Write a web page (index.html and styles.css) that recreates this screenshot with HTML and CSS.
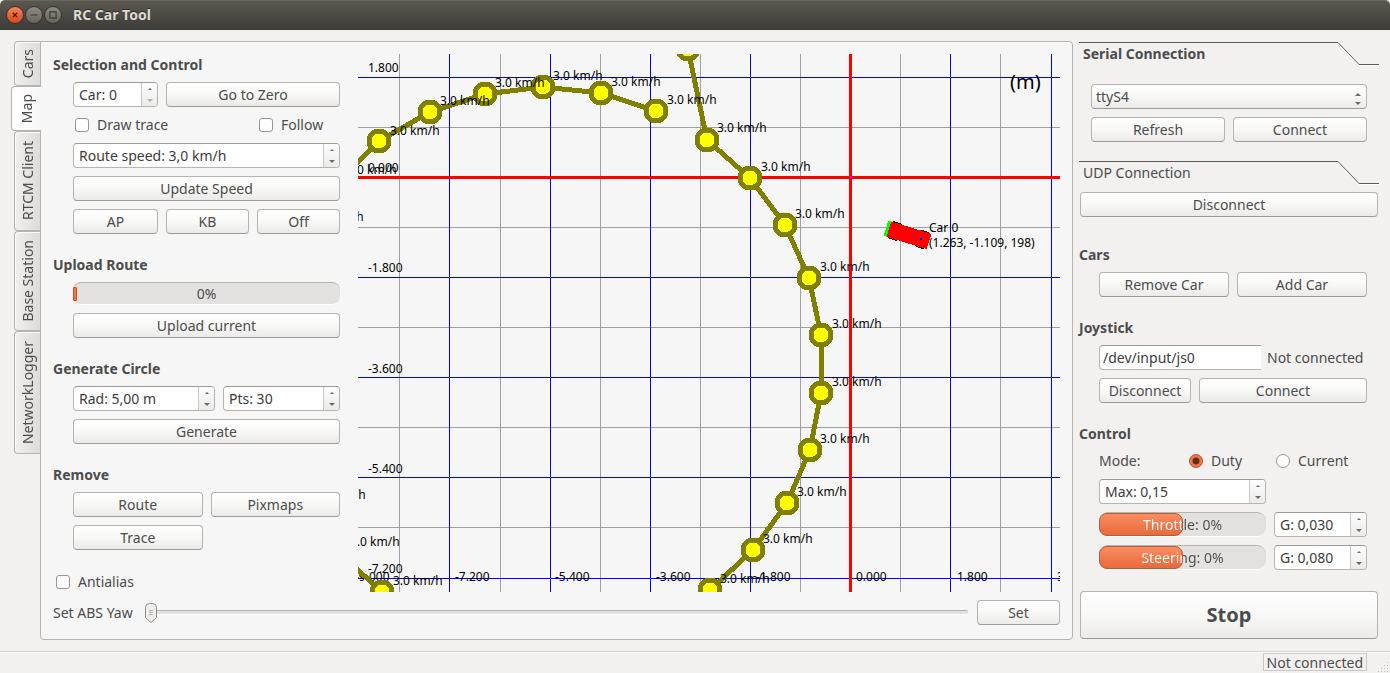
FILE: index.html
```html
<!DOCTYPE html>
<html lang="en">
<head>
<meta charset="utf-8">
<title>RC Car Tool</title>
<link rel="stylesheet" href="styles.css">
</head>
<body>
<svg class="defs" width="0" height="0" aria-hidden="true">
  <symbol id="up" viewBox="0 0 6 3"><path d="M0 3 L3 0 L6 3Z" fill="currentColor"/></symbol>
  <symbol id="down" viewBox="0 0 6 3"><path d="M0 0 L3 3 L6 0Z" fill="currentColor"/></symbol>
</svg>

<header class="titlebar">
  <div class="window-buttons">
    <button class="wb wb-close" aria-label="Close"><svg width="18" height="18" viewBox="0 0 18 18"><path d="M6.500 6.500l5 5M11.500 6.500l-5 5"/></svg></button>
    <button class="wb" aria-label="Minimize"><svg width="18" height="18" viewBox="0 0 18 18"><path d="M5 9h8"/></svg></button>
    <button class="wb" aria-label="Maximize"><svg width="18" height="18" viewBox="0 0 18 18"><path d="M5.500 5.500h7v7h-7z"/></svg></button>
  </div>
  <h1 class="window-title">RC Car Tool</h1>
</header>

<main class="workspace">
  <nav class="tabs" role="tablist" aria-label="Pages">
    <button class="tab tab-short" role="tab"><span>Cars</span></button>
    <button class="tab tab-short tab-active" role="tab" aria-selected="true"><span>Map</span></button>
    <button class="tab tab-medium" role="tab"><span>RTCM Client</span></button>
    <button class="tab tab-medium" role="tab"><span>Base Station</span></button>
    <button class="tab tab-long" role="tab"><span>NetworkLogger</span></button>
  </nav>

  <section class="page">
    <div class="page-top">
      <div class="tools">
        <section class="group">
          <h2>Selection and Control</h2>
          <div class="fields">
            <div class="row cols-car">
              <div class="spin"><input type="text" value="Car: 0" aria-label="Car"><span class="steps"><button aria-label="Up"><svg><use href="#up"/></svg></button><button class="off" aria-label="Down"><svg><use href="#down"/></svg></button></span></div>
              <button class="btn">Go to Zero</button>
            </div>
            <div class="row checks">
              <label class="check"><input type="checkbox">Draw trace</label>
              <label class="check"><input type="checkbox">Follow</label>
            </div>
            <div class="spin"><input type="text" value="Route speed: 3,0 km/h" aria-label="Route speed"><span class="steps"><button aria-label="Up"><svg><use href="#up"/></svg></button><button aria-label="Down"><svg><use href="#down"/></svg></button></span></div>
            <button class="btn">Update Speed</button>
            <div class="row cols-modes">
              <button class="btn">AP</button>
              <button class="btn">KB</button>
              <button class="btn">Off</button>
            </div>
          </div>
        </section>

        <section class="group">
          <h2>Upload Route</h2>
          <div class="fields">
            <div class="progress progress-low" role="progressbar" aria-label="Upload" aria-valuenow="0"><i class="sliver"></i><span>0%</span></div>
            <button class="btn">Upload current</button>
          </div>
        </section>

        <section class="group">
          <h2>Generate Circle</h2>
          <div class="fields">
            <div class="row cols-circle">
              <div class="spin"><input type="text" value="Rad: 5,00 m" aria-label="Radius"><span class="steps"><button aria-label="Up"><svg><use href="#up"/></svg></button><button aria-label="Down"><svg><use href="#down"/></svg></button></span></div>
              <div class="spin"><input type="text" value="Pts: 30" aria-label="Points"><span class="steps"><button aria-label="Up"><svg><use href="#up"/></svg></button><button aria-label="Down"><svg><use href="#down"/></svg></button></span></div>
            </div>
            <button class="btn">Generate</button>
          </div>
        </section>

        <section class="group">
          <h2>Remove</h2>
          <div class="fields">
            <div class="row cols-two">
              <button class="btn">Route</button>
              <button class="btn">Pixmaps</button>
              <button class="btn">Trace</button>
            </div>
          </div>
        </section>

        <label class="check antialias"><input type="checkbox">Antialias</label>
      </div>

      <div class="map">
        <svg class="map-canvas" role="img" aria-label="Route map">
          <g transform="translate(-358 -54)">
            <g class="grid-minor">
              <path d="M399.500 0V1200M500.500 0V1200M600.500 0V1200M700.500 0V1200M800.500 0V1200M900.500 0V1200M1000.500 0V1200"/>
              <path d="M300 127.500H2400M300 227.500H2400M300 327.500H2400M300 427.500H2400M300 527.500H2400"/>
            </g>
            <g class="grid-major">
              <path d="M449.500 0V1200M550.500 0V1200M650.500 0V1200M750.500 0V1200M950.500 0V1200M1051.500 0V1200"/>
              <path d="M300 77.500H2400M300 277.500H2400M300 377.500H2400M300 477.500H2400M300 578.500H2400"/>
            </g>
            <path class="axis" d="M850.500 0V1200M300 177.500H2400"/>
            <rect x="850" y="176" width="2" height="2" fill="#f0f"/>
            <g class="ticks">
              <text x="368" y="72">1.800</text>
              <text x="368" y="172">0.000</text>
              <text x="368" y="272">-1.800</text>
              <text x="368" y="373">-3.600</text>
              <text x="368" y="473">-5.400</text>
              <text x="368" y="573">-7.200</text>
              <text x="355" y="581">-9.000</text>
              <text x="455" y="581">-7.200</text>
              <text x="555" y="581">-5.400</text>
              <text x="656" y="581">-3.600</text>
              <text x="756" y="581">-1.800</text>
              <text x="856" y="581">0.000</text>
              <text x="957" y="581">1.800</text>
              <text x="1057" y="581">3.600</text>
            </g>
            <text class="unit" x="1010" y="89">(m)</text>
            <g class="car">
              <g transform="translate(908 235) rotate(17)">
                <path d="M-18-9h9v18h-9zM11-9h8v18h-8z" fill="#000"/>
                <rect x="-21" y="-8" width="43" height="16" fill="#f00"/>
                <rect x="-23" y="-8" width="3" height="16" fill="#0f0"/>
              </g>
              <rect x="920" y="238" width="2" height="2" fill="#00f"/>
            </g>
            <text x="929" y="232">Car 0</text>
            <text x="929" y="247">(1.263, -1.109, 198)</text>
            <polyline class="route" points="336,184 379,141 430,112 485,94 543,87 601,93 656,111"/>
            <polyline class="route" points="688,49 707,140 750,178 785,225 809,278 821,335 821,393 810,450 787,503 753,550 710,590 664,624"/>
            <polyline class="route" points="335,549 382,592"/>
            <g class="nodes">
              <circle cx="379" cy="141" r="10"/><circle cx="430" cy="112" r="10"/><circle cx="485" cy="94" r="10"/>
              <circle cx="543" cy="87" r="10"/><circle cx="601" cy="93" r="10"/><circle cx="656" cy="111" r="10"/>
              <circle cx="688" cy="49" r="10"/><circle cx="707" cy="140" r="10"/><circle cx="750" cy="178" r="10"/>
              <circle cx="785" cy="225" r="10"/><circle cx="809" cy="278" r="10"/><circle cx="821" cy="335" r="10"/>
              <circle cx="821" cy="393" r="10"/><circle cx="810" cy="450" r="10"/><circle cx="787" cy="503" r="10"/>
              <circle cx="753" cy="550" r="10"/><circle cx="710" cy="590" r="10"/><circle cx="382" cy="592" r="10"/>
            </g>
            <g>
              <text x="390" y="135">3.0 km/h</text><text x="440" y="105">3.0 km/h</text><text x="495" y="87">3.0 km/h</text>
              <text x="553" y="80">3.0 km/h</text><text x="611" y="86">3.0 km/h</text><text x="667" y="104">3.0 km/h</text>
              <text x="717" y="132">3.0 km/h</text><text x="761" y="171">3.0 km/h</text><text x="795" y="218">3.0 km/h</text>
              <text x="820" y="271">3.0 km/h</text><text x="832" y="328">3.0 km/h</text><text x="832" y="386">3.0 km/h</text>
              <text x="820" y="443">3.0 km/h</text><text x="797" y="496">3.0 km/h</text><text x="763" y="543">3.0 km/h</text>
              <text x="720" y="583">3.0 km/h</text><text x="393" y="585">3.0 km/h</text>
              <text x="347" y="174">3.0 km/h</text><text x="314" y="221">3.0 km/h</text>
              <text x="316" y="499">3.0 km/h</text><text x="350" y="546">3.0 km/h</text>
            </g>
          </g>
        </svg>
      </div>
    </div>

    <div class="yaw">
      <label for="yaw">Set ABS Yaw</label>
      <input id="yaw" type="range" min="0" max="360" value="0">
      <button class="btn">Set</button>
    </div>
  </section>

  <aside class="side">
    <section class="connection">
      <div class="dock-title"><h2>Serial Connection</h2><svg width="41" height="24" viewBox="0 0 41 24"><path class="shine" d="M0 1.500L21 23.500H41"/><path d="M0 .5L21 22.500H41"/></svg></div>
      <div class="serial">
        <div class="select"><select aria-label="Serial port"><option>ttyS4</option></select><span class="select-arrows"><svg><use href="#up"/></svg><svg><use href="#down"/></svg></span></div>
        <button class="btn">Refresh</button>
        <button class="btn">Connect</button>
      </div>
    </section>
    <section class="connection">
      <div class="dock-title"><h2 class="plain">UDP Connection</h2><svg width="41" height="24" viewBox="0 0 41 24"><path class="shine" d="M0 1.500L21 23.500H41"/><path d="M0 .5L21 22.500H41"/></svg></div>
      <button class="btn wide udp">Disconnect</button>
    </section>

    <div class="side-groups">
      <section class="group">
        <h2>Cars</h2>
        <div class="fields">
          <div class="row cols-two">
            <button class="btn">Remove Car</button>
            <button class="btn">Add Car</button>
          </div>
        </div>
      </section>
      <section class="group">
        <h2>Joystick</h2>
        <div class="fields">
          <div class="row joy-port">
            <input class="text-field" type="text" value="/dev/input/js0" aria-label="Joystick device">
            <span>Not connected</span>
          </div>
          <div class="row cols-joy">
            <button class="btn">Disconnect</button>
            <button class="btn">Connect</button>
          </div>
        </div>
      </section>
      <section class="group">
        <h2>Control</h2>
        <div class="fields">
          <div class="row mode">
            <span>Mode:</span>
            <label class="check"><input type="radio" name="mode" checked>Duty</label>
            <label class="check"><input type="radio" name="mode">Current</label>
          </div>
          <div class="row cols-control">
            <div class="spin"><input type="text" value="Max: 0,15" aria-label="Maximum"><span class="steps"><button aria-label="Up"><svg><use href="#up"/></svg></button><button aria-label="Down"><svg><use href="#down"/></svg></button></span></div>
          </div>
          <div class="row cols-control">
            <div class="progress" role="progressbar" aria-label="Throttle" aria-valuenow="0"><i class="fill" style="width:50%"></i><span class="split">Throttle: 0%</span></div>
            <div class="spin"><input type="text" value="G: 0,030" aria-label="Throttle gain"><span class="steps"><button aria-label="Up"><svg><use href="#up"/></svg></button><button aria-label="Down"><svg><use href="#down"/></svg></button></span></div>
          </div>
          <div class="row cols-control">
            <div class="progress" role="progressbar" aria-label="Steering" aria-valuenow="0"><i class="fill" style="width:50%"></i><span class="split">Steering: 0%</span></div>
            <div class="spin"><input type="text" value="G: 0,080" aria-label="Steering gain"><span class="steps"><button aria-label="Up"><svg><use href="#up"/></svg></button><button aria-label="Down"><svg><use href="#down"/></svg></button></span></div>
          </div>
        </div>
      </section>
    </div>
    <button class="btn wide stop">Stop</button>
  </aside>
</main>

<footer class="statusbar">
  <span class="status-text">Not connected</span>
  <svg class="grip" width="12" height="12" viewBox="0 0 12 12"><path d="M10 1h1v1h-1zM7 4h1v1H7zM10 4h1v1h-1zM4 7h1v1H4zM7 7h1v1H7zM10 7h1v1h-1zM1 10h1v1H1zM4 10h1v1H4zM7 10h1v1H7zM10 10h1v1h-1z" fill="#c4c1bd"/></svg>
</footer>
</body>
</html>
```

FILE: styles.css
```css
:root {
  --ink: #4c4c4c;
  --window: #f2f1f0;
  --panel: #f6f6f6;
  --edge: #b7b3af;
  --edge-dark: #9d9995;
  --orange: #f07746;
}

* { box-sizing: border-box; }

body {
  margin: 0;
  min-height: 100vh;
  display: flex;
  flex-direction: column;
  background: var(--window);
  color: var(--ink);
  font: 14px/20px "Noto Sans", "Open Sans", sans-serif;
}

button, input, select { font: inherit; color: inherit; margin: 0; }
h1, h2 { margin: 0; font-size: 14px; line-height: 20px; }
.defs { position: absolute; }

/* Title bar */
.titlebar {
  height: 30px;
  flex: none;
  display: flex;
  align-items: center;
  gap: 11px;
  padding: 0 0 2px 6px;
  background: linear-gradient(#5b5850, #3c3b37);
  border-top: 1px solid #6a675e;
  border-radius: 5px 5px 0 0;
}
.window-title { color: #dfdbd2; text-shadow: 0 -1px #2e2d29; }
.window-buttons { display: flex; gap: 1px; }
.wb {
  width: 18px;
  height: 18px;
  padding: 0;
  border: 0;
  background: none;
}
.wb svg {
  display: block;
  border-radius: 50%;
  border: 1px solid #34332f;
  background: linear-gradient(#8e8b82, #66635b);
  fill: none;
  stroke: #3a3935;
  stroke-width: 1.3;
}
.wb-close svg { background: linear-gradient(#f58263, #dd4814); stroke: #4a1d0c; }

/* Window layout */
.workspace { flex: 1; display: flex; padding: 11px; }

.tabs { width: 29px; flex: none; display: flex; flex-direction: column; align-items: flex-end; }
.tab {
  width: 26px;
  padding: 0;
  display: flex;
  align-items: center;
  justify-content: center;
  border: 1px solid var(--edge);
  border-right: 0;
  border-radius: 4px 0 0 4px;
  background: linear-gradient(90deg, #f0efee, #dedcda);
  box-shadow: inset 1px 1px #fafafa;
}
.tab span { writing-mode: vertical-rl; transform: rotate(180deg); white-space: nowrap; }
.tab-short { height: 45px; }
.tab-medium { height: 100px; }
.tab-long { height: 123px; }
.tab-active {
  width: 30px;
  margin-right: -1px;
  z-index: 1;
  background: linear-gradient(90deg, #fff, var(--panel));
}

.page {
  flex: 1;
  min-width: 0;
  display: flex;
  flex-direction: column;
  gap: 8px;
  padding: 12px 12px 14px;
  border: 1px solid var(--edge);
  border-radius: 0 4px 4px 4px;
  background: var(--panel);
  box-shadow: inset 0 1px #fff;
}
.page-top { flex: 1; display: flex; gap: 18px; }
.tools { width: 287px; flex: none; display: flex; flex-direction: column; gap: 20px; }
.antialias { margin-top: auto; padding-left: 3px; }

.map { flex: 1; min-width: 0; position: relative; overflow: hidden; }
.map-canvas {
  position: absolute;
  inset: 0;
  width: 100%;
  height: 100%;
  font-size: 12px;
  fill: #000;
}
.map-canvas path, .map-canvas polyline, .map-canvas circle, .map-canvas rect { shape-rendering: crispEdges; }
.grid-minor { stroke: #a0a0a4; }
.grid-major { stroke: #00f; }
.axis { stroke: #f00; stroke-width: 3; }
.route { fill: none; stroke: #808000; stroke-width: 5; }
.nodes { fill: #ff0; stroke: #808000; stroke-width: 5; }
.unit { font-size: 20px; }

.yaw { display: flex; align-items: center; gap: 9px; }
.yaw label { min-width: 83px; }
.yaw .btn { width: 83px; }
.yaw input {
  flex: 1;
  min-width: 0;
  height: 22px;
  appearance: none;
  background: none;
}
.yaw input::-webkit-slider-runnable-track {
  height: 5px;
  border-top: 1px solid #b5b1ad;
  border-bottom: 1px solid #fff;
  border-radius: 2px;
  background: #e2e1df;
}
.yaw input::-webkit-slider-thumb {
  appearance: none;
  width: 12px;
  height: 20px;
  margin-top: -8px;
  background: url("data:image/svg+xml,%3Csvg xmlns='http://www.w3.org/2000/svg' viewBox='0 0 12 20'%3E%3Cpath d='M.5 4.500Q.5.500 4.500.500H7.500Q11.500.500 11.500 4.500V14.500L6 19.500L.5 14.500Z' fill='%23efeeed' stroke='%238f8b87'/%3E%3Cpath d='M4 7.500H8M4 9.500H8M4 11.500H8' stroke='%23b5b1ad'/%3E%3C/svg%3E");
}

/* Groups and fields */
.group { display: flex; flex-direction: column; gap: 8px; }
.group h2 { height: 20px; line-height: 22px; }
.fields { display: flex; flex-direction: column; gap: 8px; padding-left: 20px; }
.row { display: grid; gap: 8px; align-items: center; }
.cols-car { grid-template-columns: 85px 1fr; }
.cols-modes { grid-template-columns: 85px 1fr 1fr; }
.cols-circle { grid-template-columns: 142px 1fr; }
.cols-two { grid-template-columns: 1fr 1fr; }
.cols-joy { grid-template-columns: 92px 1fr; }
.cols-control { grid-template-columns: 1fr 93px; }
.checks { grid-template-columns: 176px 1fr; padding-left: 2px; }
.joy-port { grid-template-columns: 162px 1fr; gap: 6px; white-space: nowrap; }
.mode { grid-template-columns: 82px 79px 1fr; }

.btn {
  height: 25px;
  padding: 0 6px;
  border: 1px solid var(--edge);
  border-bottom-color: var(--edge-dark);
  border-radius: 4px;
  background: linear-gradient(#fff, #f8f8f7 50%, #ebeae8);
  line-height: 20px;
  white-space: nowrap;
}

.spin, .text-field {
  height: 25px;
  min-width: 0;
  border: 1px solid var(--edge);
  border-top-color: var(--edge-dark);
  border-radius: 4px;
  background: #fff;
  color: #3c3c3c;
}
.spin { display: flex; overflow: hidden; }
.spin input {
  flex: 1;
  width: 0;
  min-width: 0;
  padding: 0 5px;
  border: 0;
  background: none;
}
.steps {
  width: 16px;
  flex: none;
  display: flex;
  flex-direction: column;
  border-left: 1px solid #c9c6c3;
  background: linear-gradient(#fdfdfd, #ecebea);
}
.steps button {
  flex: 1;
  padding: 0;
  border: 0;
  background: none;
  display: flex;
  align-items: center;
  justify-content: center;
  color: #6a6a6a;
}
.steps svg, .select-arrows svg { width: 6px; height: 3px; display: block; }
.steps button:first-child svg { width: 4px; height: 2px; }
.steps .off { color: #b0aeac; }
.text-field { width: 100%; padding: 0 3px; border-right: 0; border-radius: 4px 0 0 4px; }

.check { display: flex; align-items: center; gap: 8px; height: 20px; }
.check input {
  appearance: none;
  width: 14px;
  height: 14px;
  flex: none;
  border: 1px solid #9a9692;
  border-radius: 3px;
  background: #fff;
}
.check input[type="radio"] { border-radius: 50%; }
.check input[type="radio"]:checked {
  border-color: #b0532f;
  background: radial-gradient(circle, #6b2d17 3px, var(--orange) 4px);
}

.progress {
  height: 25px;
  display: grid;
  align-items: center;
  text-align: center;
  border-top: 1px solid #b7b3af;
  border-bottom: 1px solid #fff;
  border-radius: 9px;
  background: #e3e1df;
  box-shadow: inset 1px 0 #cfccc9;
}
.progress > * { grid-area: 1 / 1; }
.progress-low { height: 23px; border-radius: 8px; }
.sliver { width: 4px; height: 14px; border: 1px solid #b5532e; border-radius: 1px; background: var(--orange); }
.fill {
  height: 23px;
  border: 1px solid #b65c3a;
  border-radius: 8px;
  background: linear-gradient(#fb8d62, #e9693a);
}
.split {
  background: linear-gradient(90deg, #fff 50%, var(--ink) 50%);
  background-clip: text;
  -webkit-background-clip: text;
  color: transparent;
}

/* Right side */
.side { width: 300px; flex: none; margin-left: 6px; padding-top: 1px; display: flex; flex-direction: column; }
.connection { display: flex; flex-direction: column; }
.dock-title { display: flex; height: 24px; }
.dock-title h2 { flex: 1; height: 24px; padding: 1px 4px; border-top: 1px solid #5c5a58; }
.dock-title svg { fill: none; stroke: #5c5a58; }
.dock-title .shine { stroke: #fff; }
.plain { font-weight: 400; }
.serial { display: grid; grid-template-columns: 1fr 1fr; gap: 8px; padding: 18px 12px 19px; }
.select { grid-column: 1 / -1; position: relative; }
.select select {
  width: 100%;
  height: 25px;
  padding: 0 20px 0 4px;
  display: block;
  appearance: none;
  border: 1px solid var(--edge);
  border-bottom-color: var(--edge-dark);
  border-radius: 4px;
  background: linear-gradient(#fff, #f8f8f7 50%, #ebeae8);
}
.select-arrows {
  position: absolute;
  right: 6px;
  top: 9px;
  display: flex;
  flex-direction: column;
  gap: 6px;
  color: #6a6a6a;
  pointer-events: none;
}
.wide { margin: 0 1px; }
.udp { margin-top: 7px; }
.side-groups { display: flex; flex-direction: column; gap: 20px; padding: 27px 0 21px; }
.side-groups .fields { padding-right: 12px; }
.stop { height: 48px; font-size: 20px; font-weight: 700; line-height: 24px; }

/* Status bar */
.statusbar {
  height: 22px;
  flex: none;
  display: flex;
  justify-content: flex-end;
  align-items: flex-start;
  padding: 1px 1px 0 0;
  border-top: 1px solid #d5d2cf;
  box-shadow: inset 0 1px #fff;
}
.status-text { height: 18px; padding: 0 3px; border: 1px solid #c9c6c3; line-height: 18px; }
.grip { margin: 8px 0 0 10px; }
```
